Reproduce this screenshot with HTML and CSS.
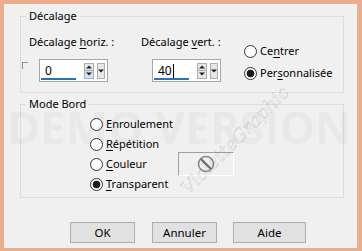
FILE: index.html
```html
<!DOCTYPE html>
<html lang="fr">
<head>
<meta charset="utf-8">
<link rel="stylesheet" href="styles.css">
</head>
<body>
<div class="frame">
  <div class="dialog">
    <fieldset class="group g1">
      <legend>Décalage</legend>
      <div class="g1body">
        <div class="g1left">
          <div class="lblrow">
            <span class="lbl1">Décalage <u>h</u>oriz. :</span>
            <span class="lbl2">Décalage <u>v</u>ert. :</span>
          </div>
          <div class="ctlrow">
            <span class="check"></span>
            <div class="spin spin1">
              <span class="val">0</span>
              <span class="updown focus"><span class="up"></span><span class="down"></span></span>
              <span class="drop"></span>
            </div>
            <div class="spin spin2">
              <span class="val">40<span class="caret"></span></span>
              <span class="updown"><span class="up"></span><span class="down"></span></span>
              <span class="drop"></span>
            </div>
          </div>
        </div>
        <div class="g1right">
          <div class="radio"><span class="dot"></span><span>Ce<u>n</u>trer</span></div>
          <div class="radio r2"><span class="dot on"></span><span>Per<u>s</u>onnalisée</span></div>
        </div>
      </div>
    </fieldset>

    <fieldset class="group g2">
      <legend>Mode Bord</legend>
      <div class="g2body">
        <div class="radio row"><span class="dot"></span><span><u>E</u>nroulement</span></div>
        <div class="radio row"><span class="dot"></span><span><u>R</u>épétition</span></div>
        <div class="radio row"><span class="dot"></span><span class="rlabel"><u>C</u>ouleur</span><span class="swatch"><svg width="20" height="20" viewBox="0 0 20 20"><circle cx="10" cy="10" r="7.5" fill="none" stroke="#8a8a8a" stroke-width="1.6"/><line x1="5" y1="5" x2="15" y2="15" stroke="#6e6e6e" stroke-width="2.2"/></svg></span></div>
        <div class="radio row"><span class="dot on"></span><span><u>T</u>ransparent</span></div>
      </div>
    </fieldset>

    <div class="buttons">
      <button class="btn ok">OK</button>
      <button class="btn cancel">Annuler</button>
      <button class="btn help">Aide</button>
    </div>

    <div class="watermark">DEMO VERSION</div>
    <div class="signature">VioletteGraphic</div>
  </div>
</div>
</body>
</html>
```
FILE: styles.css
```css
* { box-sizing: border-box; }
html, body { margin: 0; padding: 0; }
body {
  font-family: "Noto Sans", "Open Sans", sans-serif;
  font-size: 11px;
  color: #000;
}
.frame {
  width: 362px;
  height: 251px;
  background: #e8ae8e;
  padding: 4px 5px 3px 4px;
}
.dialog {
  position: relative;
  height: 100%;
  background: #f0f0f0;
  overflow: hidden;
  padding-top: 4px;
}
u { text-decoration: underline; text-decoration-thickness: 1px; text-underline-offset: 2px; }

.group {
  margin: 0 0 0 16px;
  width: 324px;
  padding: 0;
  border: 1px solid #dcdcdc;
  min-width: 0;
}
.group legend {
  padding: 0 3px;
  margin-left: 5px;
  line-height: 16px;
  height: 16px;
}
.g1body {
  display: flex;
  height: 68px;
}
.g1left { width: 223px; }
.lblrow {
  display: flex;
  margin-top: 10px;
  height: 16px;
  line-height: 16px;
}
.lbl1 { margin-left: 8px; width: 112px; }
.ctlrow {
  display: flex;
  margin-top: 9px;
}
.check {
  width: 6px;
  height: 7px;
  margin: 3px 0 0 1px;
  border-top: 1px solid #8c8c8c;
  border-left: 1px solid #8c8c8c;
}
.spin {
  position: relative;
  display: flex;
  align-items: center;
  height: 23px;
  width: 69px;
  border: 1px solid #a6a6a6;
  background: #fff;
}
.spin1 { margin-left: 11px; }
.spin2 { margin-left: 44px; }
.spin::after {
  content: "";
  position: absolute;
  left: 1px;
  bottom: 1px;
  width: 35px;
  height: 2px;
  background: #2a72b5;
}
.val {
  flex: 1;
  padding-left: 5px;
  font-size: 12px;
  line-height: 16px;
  display: flex;
  align-items: center;
}
.caret {
  display: inline-block;
  width: 1px;
  height: 14px;
  background: #000;
  margin-left: 1px;
}
.updown {
  display: flex;
  flex-direction: column;
  width: 10px;
  height: 16px;
  border: 1px solid #adadad;
  background: #e6e6e6;
}
.updown .up, .updown .down {
  flex: 1;
  position: relative;
}
.updown .up { border-bottom: 1px solid #adadad; }
.updown.focus .down { background: #cce4f7; }
.updown .up::before, .updown .down::before, .drop::before {
  content: "";
  position: absolute;
  left: 50%;
  top: 50%;
  transform: translate(-50%, -50%);
  border-left: 3px solid transparent;
  border-right: 3px solid transparent;
}
.updown .up::before { border-bottom: 3px solid #222; }
.updown .down::before { border-top: 3px solid #222; }
.drop {
  position: relative;
  width: 8px;
  height: 16px;
  margin: 0 2px 0 3px;
  border: 1px solid #adadad;
  background: #e6e6e6;
}
.drop::before { border-top: 3px solid #222; }

.g1right { margin-top: 19px; }
.radio {
  display: flex;
  align-items: center;
  height: 16px;
  line-height: 16px;
  white-space: nowrap;
}
.r2 { margin-top: 6px; }
.dot {
  width: 13px;
  height: 13px;
  border: 1px solid #333;
  border-radius: 50%;
  background: #fff;
  margin-right: 3px;
  flex: none;
}
.dot.on {
  background: radial-gradient(circle, #1a1a1a 0 3.5px, #fff 4.2px);
}

.g2 { margin-top: 3px; }
.g2body {
  height: 85px;
  padding: 2px 0 0 69px;
}
.row { height: 20px; }
.rlabel { width: 72px; }
.swatch {
  width: 56px;
  height: 24px;
  margin: -2px 0;
  border-top: 1px solid #a0a0a0;
  border-left: 1px solid #a0a0a0;
  border-bottom: 1px solid #fff;
  border-right: 1px solid #fff;
  display: flex;
  align-items: center;
  justify-content: center;
}

.buttons {
  display: flex;
  margin: 24px 0 0 66px;
}
.btn {
  height: 21px;
  padding: 0;
  font: inherit;
  font-size: 11.5px;
  color: #000;
  background: #e1e1e1;
  border: 1px solid #adadad;
}
.ok { width: 65px; }
.cancel { width: 65px; margin-left: 17px; }
.help { width: 73px; margin-left: 16px; }

.watermark {
  position: absolute;
  left: 3px;
  top: 98px;
  font-family: "Open Sans", sans-serif;
  font-weight: 700;
  font-size: 45px;
  line-height: 50px;
  color: rgba(0, 0, 0, 0.05);
  white-space: nowrap;
  pointer-events: none;
}
.signature {
  position: absolute;
  left: 180px;
  top: 176px;
  font-family: "DejaVu Serif", serif;
  font-style: italic;
  font-size: 18px;
  color: transparent;
  -webkit-text-stroke: 0.5px rgba(0, 0, 0, 0.18);
  transform: rotate(-45deg);
  transform-origin: left center;
  white-space: nowrap;
  pointer-events: none;
}
```
